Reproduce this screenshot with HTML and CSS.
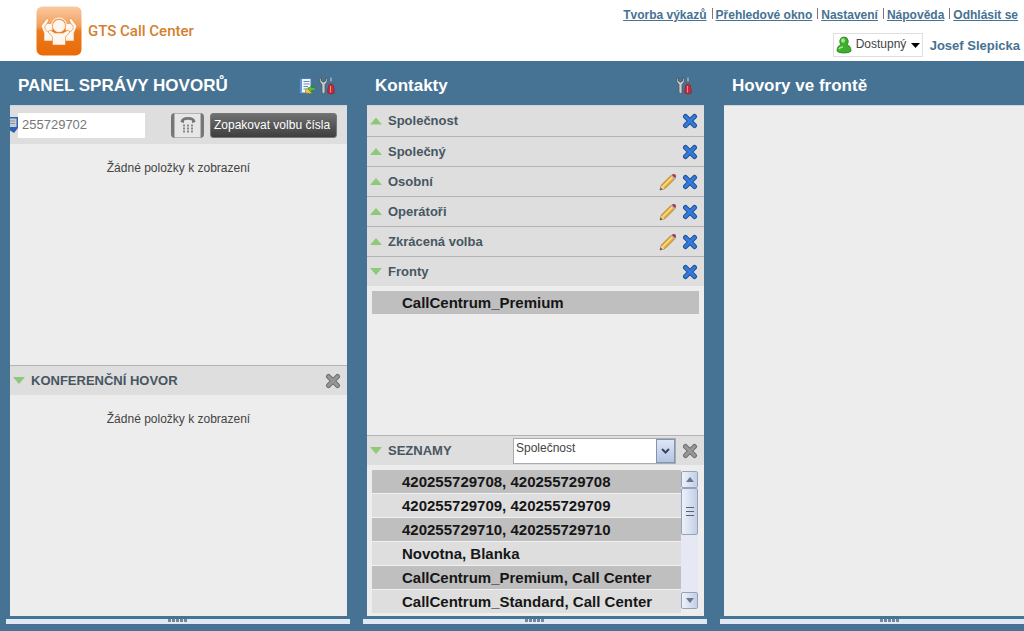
FILE: index.html
```html
<!DOCTYPE html>
<html lang="cs">
<head>
<meta charset="utf-8">
<title>GTS Call Center</title>
<link rel="stylesheet" href="styles.css">
</head>
<body>
<svg class="symbols" aria-hidden="true">
  <symbol id="cross" viewBox="0 0 16 16">
    <path class="cross-edge" d="M3.500 3.500L12.500 12.500M12.500 3.500L3.500 12.500"/>
    <path class="cross-core" d="M3.500 3.500L12.500 12.500M12.500 3.500L3.500 12.500"/>
  </symbol>
  <symbol id="pencil" viewBox="0 0 18 18">
    <path d="M1 17L2.500 12L12.500 2L16 5.500L6 15.500Z" fill="#e9b23c" stroke="#a8742c" stroke-width=".9"/>
    <path d="M4 13.500L13.500 4" stroke="#fbe08a" stroke-width="1.500"/>
    <path d="M1 17L2.500 12.500L5.500 15.500Z" fill="#ecd3b4"/>
    <path d="M1 17L1.700 14.500L3.500 16.300Z" fill="#444"/>
    <path d="M11.500 3L12.700 1.800L16.200 5.300L15 6.500Z" fill="#b9b9c4"/>
    <path d="M12.700 1.800Q14.500 .3 16.500 1.600Q17.900 3.600 16.200 5.300Z" fill="#a03a48"/>
  </symbol>
  <symbol id="tools" viewBox="0 0 16 18">
    <path d="M.8 1.500V5L2.900 7.500V15.500Q4.500 17.800 6.100 15.500V7.500L8.200 5V1.500L6.500 .8V4L4.500 5.200L2.500 4V.8Z" fill="#c9cdd0" stroke="#4c565e" stroke-width=".9"/>
    <path d="M12 .5V8" stroke="#9fb3c2" stroke-width="1.500"/>
    <path d="M10.500 4.500H13.500V8H10.500Z" fill="#59656f"/>
    <path d="M9.500 8.500Q12 6 14.500 8.500V11L15.200 12V16Q12 18.200 8.800 16V12L9.500 11Z" fill="#c92a38" stroke="#7d2737" stroke-width=".7"/>
    <path d="M11.500 9V15.500" stroke="#f18a90"/>
  </symbol>
</svg>

<header class="top">
  <div class="brand">
    <svg class="logo" viewBox="0 0 46 50" aria-hidden="true">
      <defs>
        <linearGradient id="orange" x1="0" y1="0" x2="0" y2="1">
          <stop offset="0" stop-color="#f9c9a0"/><stop offset=".4" stop-color="#f2a05c"/>
          <stop offset=".5" stop-color="#ea7a1c"/><stop offset="1" stop-color="#ea6a08"/>
        </linearGradient>
      </defs>
      <rect x=".5" y=".5" width="45" height="49" rx="6" fill="url(#orange)"/>
      <g fill="#fff7ef" stroke="#e57a24" stroke-width=".6">
        <path d="M8 35V27L5 20L11 12L13 14L10 20L14 26H18V35Z"/>
        <path d="M38 35V27L41 20L35 12L33 14L36 20L32 26H28V35Z"/>
        <circle cx="13" cy="21.500" r="4.200"/><circle cx="33" cy="21.500" r="4.200"/>
        <path d="M16.500 39V31L12 26L14 24L19 27H27L32 24L34 26L29.500 31V39Z"/>
        <circle cx="23" cy="20" r="6.500"/>
      </g>
      <path d="M15.500 20Q16 12 23 12T30.500 20" fill="none" stroke="#fff7ef"/>
    </svg>
    <span class="brand-name">GTS Call Center</span>
  </div>
  <div class="account">
    <nav class="links">
      <a href="#">Tvorba výkazů</a><a href="#">Přehledové okno</a><a href="#">Nastavení</a><a href="#">Nápověda</a><a href="#">Odhlásit se</a>
    </nav>
    <div class="user">
      <label class="status">
        <svg class="person" viewBox="0 0 16 18" aria-hidden="true">
          <path d="M1 15Q1 9.500 5 9Q3.500 7 3.800 4.500Q4.500 1 8 1T12.200 4.500Q12.500 7 11 9Q15 9.500 15 15Q14 17 8 17T1 15Z" fill="#3fae2f" stroke="#26821c" stroke-width=".8"/>
          <ellipse cx="7" cy="4.500" rx="2" ry="2.200" fill="#a5e48f"/>
          <path d="M3 13Q4 11 7 11" stroke="#a5e48f" stroke-width="1.500" fill="none"/>
        </svg>
        <select class="status-select" aria-label="Stav"><option>Dostupný</option></select>
        <svg class="caret" viewBox="0 0 9 5" aria-hidden="true"><path d="M0 0H9L4.500 5Z"/></svg>
      </label>
      <span class="user-name">Josef Slepicka</span>
    </div>
  </div>
</header>

<main class="panels">
  <section class="panel">
    <div class="panel-head">
      <h1>PANEL SPRÁVY HOVORŮ</h1>
      <button class="icon-btn" aria-label="Záznamy">
        <svg class="icon-tool" viewBox="0 0 16 18" aria-hidden="true">
          <path d="M1 1.500H12V16H1Z" fill="#f4f8fc" stroke="#4d7db0"/>
          <path d="M2 2V15.500" stroke="#5b94cf" stroke-width="2"/>
          <path d="M4.500 4.500H10.500M4.500 7H10.500M4.500 9.500H9M4.500 12H8" stroke="#6590bd"/>
          <path d="M6.500 16V12.500L9.500 10.500L12.500 12.500V16.500Z" fill="#e6c746" stroke="#927a28" stroke-width=".6"/>
          <path d="M9 12L12.500 8.500V10.700H16V13.300H12.500V15.500Z" fill="#63bd3e" stroke="#2e7d22" stroke-width=".6"/>
        </svg>
      </button>
      <button class="icon-btn" aria-label="Nástroje"><svg class="icon-tool"><use href="#tools"/></svg></button>
    </div>
    <div class="panel-body">
      <div class="dialer">
        <svg class="handset" viewBox="0 0 8 18" aria-hidden="true">
          <path d="M0 1H8V12L4 17L0 14.500Z" fill="#2f62ae"/><path d="M0 2.500H6.500V11H0Z" fill="#c3ccd6"/><path d="M0 5H5M0 7.500H5" stroke="#8492a2"/>
        </svg>
        <input class="number" type="text" value="255729702" aria-label="Telefonní číslo">
        <button class="dial" aria-label="Volat">
          <svg class="dial-icon" viewBox="0 0 18 20" aria-hidden="true">
            <path d="M1.500 7Q2 2 9 2T16.500 7L13 8V5.500Q9 4 5 5.500V8Z" fill="#777"/>
            <path d="M4 10.500H14M4 13.500H14M4 16.500H14" stroke="#888" stroke-width="2" stroke-dasharray="2"/>
          </svg>
        </button>
        <button class="redial">Zopakovat volbu čísla</button>
      </div>
      <div class="section-content empty">Žádné položky k zobrazení</div>
      <div class="section-head ruled">
        <span class="arrow open"></span><h2>KONFERENČNÍ HOVOR</h2>
        <button class="icon-btn" aria-label="Zavřít"><svg class="icon muted"><use href="#cross"/></svg></button>
      </div>
      <div class="section-content empty">Žádné položky k zobrazení</div>
    </div>
    <div class="splitter"><span class="grip"></span></div>
  </section>

  <section class="panel">
    <div class="panel-head">
      <h1>Kontakty</h1>
      <button class="icon-btn" aria-label="Nástroje"><svg class="icon-tool"><use href="#tools"/></svg></button>
    </div>
    <div class="panel-body">
      <div class="section-head"><span class="arrow"></span><h2>Společnost</h2>
        <button class="icon-btn" aria-label="Zavřít"><svg class="icon"><use href="#cross"/></svg></button></div>
      <div class="section-head ruled"><span class="arrow"></span><h2>Společný</h2>
        <button class="icon-btn" aria-label="Zavřít"><svg class="icon"><use href="#cross"/></svg></button></div>
      <div class="section-head ruled"><span class="arrow"></span><h2>Osobní</h2>
        <button class="icon-btn" aria-label="Upravit"><svg class="icon-edit"><use href="#pencil"/></svg></button>
        <button class="icon-btn" aria-label="Zavřít"><svg class="icon"><use href="#cross"/></svg></button></div>
      <div class="section-head ruled"><span class="arrow"></span><h2>Operátoři</h2>
        <button class="icon-btn" aria-label="Upravit"><svg class="icon-edit"><use href="#pencil"/></svg></button>
        <button class="icon-btn" aria-label="Zavřít"><svg class="icon"><use href="#cross"/></svg></button></div>
      <div class="section-head ruled"><span class="arrow"></span><h2>Zkrácená volba</h2>
        <button class="icon-btn" aria-label="Upravit"><svg class="icon-edit"><use href="#pencil"/></svg></button>
        <button class="icon-btn" aria-label="Zavřít"><svg class="icon"><use href="#cross"/></svg></button></div>
      <div class="section-head ruled"><span class="arrow open"></span><h2>Fronty</h2>
        <button class="icon-btn" aria-label="Zavřít"><svg class="icon"><use href="#cross"/></svg></button></div>
      <div class="section-content">
        <ul class="rows"><li>CallCentrum_Premium</li></ul>
      </div>
      <div class="section-head ruled">
        <span class="arrow open"></span><h2>SEZNAMY</h2>
        <span class="combo">
          <select class="combo-select" aria-label="Seznam"><option>Společnost</option></select>
          <span class="combo-button"><svg class="chevron" viewBox="0 0 9 6" aria-hidden="true"><path d="M1 1L4.500 4.500L8 1"/></svg></span>
        </span>
        <button class="icon-btn" aria-label="Zavřít"><svg class="icon muted"><use href="#cross"/></svg></button>
      </div>
      <div class="directory">
        <ul class="rows">
          <li>420255729708, 420255729708</li>
          <li>420255729709, 420255729709</li>
          <li>420255729710, 420255729710</li>
          <li>Novotna, Blanka</li>
          <li>CallCentrum_Premium, Call Center</li>
          <li>CallCentrum_Standard, Call Center</li>
        </ul>
        <div class="scrollbar">
          <button class="scroll-btn" aria-label="Nahoru"><svg class="scroll-arrow" viewBox="0 0 8 5"><path d="M0 5L4 0L8 5Z"/></svg></button>
          <div class="thumb"><span class="thumb-lines"></span></div>
          <div class="track"></div>
          <button class="scroll-btn" aria-label="Dolů"><svg class="scroll-arrow" viewBox="0 0 8 5"><path d="M0 0H8L4 5Z"/></svg></button>
        </div>
      </div>
    </div>
    <div class="splitter"><span class="grip"></span></div>
  </section>

  <section class="panel cut">
    <div class="panel-head"><h1>Hovory ve frontě</h1></div>
    <div class="panel-body"></div>
    <div class="splitter"><span class="grip"></span></div>
  </section>
</main>
</body>
</html>
```
FILE: styles.css
```css
* { box-sizing: border-box; }

body {
  margin: 0;
  min-height: 100vh;
  display: flex;
  flex-direction: column;
  overflow-x: hidden;
  background: #467293;
  color: #444;
  font-family: "Liberation Sans", Arial, sans-serif;
  font-size: 12px;
}

h1, h2, ul { margin: 0; padding: 0; }
button, input, select { font: inherit; color: inherit; }
.symbols { display: none; }

/* Top bar */
.top {
  display: flex;
  justify-content: space-between;
  height: 61px;
  padding: 6px 4px 0 36px;
  background: #fff;
}
.brand { display: flex; gap: 6px; }
.logo { width: 46px; height: 50px; }
.brand-name {
  color: #d5802f;
  font: 500 15px/50px Roboto, sans-serif;
}
.account {
  display: flex;
  flex-direction: column;
  align-items: flex-end;
  gap: 9px;
  color: #467293;
  font-weight: bold;
}
.links {
  display: flex;
  padding-right: 2px;
  font-size: 12px;
  line-height: 18px;
}
.links a { color: inherit; }
.links a + a::before {
  content: "";
  display: inline-block;
  width: 1px;
  height: 11px;
  margin: 0 3px 0 5px;
  background: #8b6f7d;
}
.user { display: flex; align-items: center; gap: 7px; font-size: 13px; }
.status {
  display: flex;
  align-items: center;
  width: 90px;
  height: 24px;
  padding: 0 2px;
  border: 1px solid #e2dedf;
  color: #444;
  font-size: 12px;
  font-weight: normal;
}
.person { width: 16px; height: 18px; margin-right: 4px; }
.status-select {
  flex: 1;
  min-width: 0;
  height: 20px;
  padding: 0 0 2px;
  border: 0;
  background: none;
  appearance: none;
}
.caret { width: 9px; height: 5px; }

/* Columns */
.panels {
  flex: 1;
  display: grid;
  grid-template-columns: 43fr 43fr 38fr;
  gap: 13px;
  padding: 0 0 7px 6px;
}
.panel { display: flex; flex-direction: column; min-width: 0; }
.panel-head {
  display: flex;
  align-items: center;
  gap: 4px;
  height: 44px;
  padding: 6px 15px 0 12px;
}
.panel-head h1 {
  flex: 1;
  color: #fff;
  font-size: 17px;
  line-height: 20px;
  white-space: nowrap;
}
.panel-body {
  flex: 1;
  display: flex;
  flex-direction: column;
  margin: 0 3px 0 4px;
  border-top: 1px solid #cfd6db;
  background: #ededed;
}
.splitter {
  height: 5px;
  margin-top: 3px;
  background: #dfe9f4;
}
.grip {
  display: block;
  width: 20px;
  height: 3px;
  margin: 0 auto;
  background: repeating-linear-gradient(90deg, #71889c 0 3px, #dfe9f4 3px 4px);
}
.cut .panel-body { margin-right: 0; }
.cut .grip { margin-left: 160px; }

.icon-btn {
  display: flex;
  padding: 0;
  border: 0;
  background: none;
}
.icon-tool { width: 16px; height: 18px; }
.icon { width: 16px; height: 16px; }
.icon-edit { width: 18px; height: 18px; }
.cross-edge { stroke: #24508f; stroke-width: 5; stroke-linecap: round; }
.cross-core { stroke: #347bdf; stroke-width: 3; stroke-linecap: round; }
.muted { filter: grayscale(1) brightness(1.4) contrast(.7); }

/* Dialer */
.dialer {
  display: flex;
  align-items: center;
  height: 38px;
  padding-right: 10px;
  background: #dedede;
}
.handset { width: 8px; height: 18px; }
.number {
  flex: 1;
  min-width: 0;
  height: 25px;
  margin-right: 26px;
  padding: 0 4px 2px;
  border: 0;
  background: #fff;
  color: #777;
  font-size: 13px;
}
.dial {
  display: flex;
  justify-content: center;
  width: 33px;
  height: 25px;
  margin-right: 6px;
  padding: 2px 0;
  border: solid #777;
  border-width: 0 3px;
  border-radius: 4px;
  background: #e6e6e6;
  box-shadow: inset 0 0 0 1px #b4b4b4;
}
.dial-icon { width: 18px; height: 20px; }
.redial {
  width: 127px;
  height: 25px;
  padding: 0 3px;
  border: 1px solid #777;
  border-radius: 3px;
  background: linear-gradient(#707070, #3e3e3e);
  color: #fff;
  text-align: left;
  white-space: nowrap;
}

/* Sections */
.section-head {
  display: flex;
  align-items: center;
  gap: 5px;
  height: 30px;
  padding: 0 6px 0 3px;
  background: #dedede;
}
.section-head.ruled { border-top: 1px solid #b3b3b3; }
.section-head h2 {
  flex: 1;
  padding-left: 1px;
  color: #475661;
  font-size: 13px;
  line-height: 16px;
}
.arrow {
  width: 12px;
  height: 7px;
  background: #8fc879;
  clip-path: polygon(50% 0, 100% 100%, 0 100%);
}
.arrow.open { clip-path: polygon(0 0, 100% 0, 50% 100%); }
.section-content { flex: 1; padding: 5px; }
.section-content.empty {
  padding-top: 16px;
  line-height: 16px;
  text-align: center;
}
.rows {
  flex: 1;
  min-width: 0;
  display: flex;
  flex-direction: column;
  gap: 1px;
  list-style: none;
  color: #161616;
  font-size: 15px;
  font-weight: bold;
  line-height: 23px;
}
.rows li {
  padding-left: 30px;
  background: #dedede;
  white-space: nowrap;
}
.rows li:nth-child(odd) { background: #bfbfbf; }

/* Combo box */
.combo {
  display: flex;
  width: 163px;
  height: 26px;
  margin-right: 1px;
  border: 1px solid #a5adb2;
  background: #fff;
}
.combo-select {
  flex: 1;
  min-width: 0;
  padding: 0 2px 6px;
  border: 0;
  background: none;
  appearance: none;
}
.combo-button {
  display: flex;
  align-items: center;
  justify-content: center;
  width: 19px;
  border: 1px solid #8094b4;
  background: linear-gradient(#dfe7f5, #b3c4e2);
}
.chevron {
  width: 9px;
  height: 6px;
  fill: none;
  stroke: #39465f;
  stroke-width: 2;
}

/* Directory list */
.directory {
  display: flex;
  padding: 5px 6px 3px 5px;
}
.directory .rows { background: #f1f1f1; }
.scrollbar {
  display: flex;
  flex-direction: column;
  width: 17px;
  margin: 1px 0 4px;
  background: #e6e9f3;
}
.scroll-btn, .thumb {
  display: flex;
  align-items: center;
  justify-content: center;
  height: 17px;
  padding: 0;
  border: 1px solid #94a2bd;
  border-radius: 2px;
  background: linear-gradient(90deg, #eef2fa, #c3cfe6);
}
.thumb { height: 47px; }
.track { flex: 1; }
.thumb-lines {
  width: 8px;
  height: 9px;
  background: repeating-linear-gradient(#56627c 0 1px, transparent 1px 4px);
}
.scroll-arrow { width: 8px; height: 5px; fill: #6b7690; }
```
